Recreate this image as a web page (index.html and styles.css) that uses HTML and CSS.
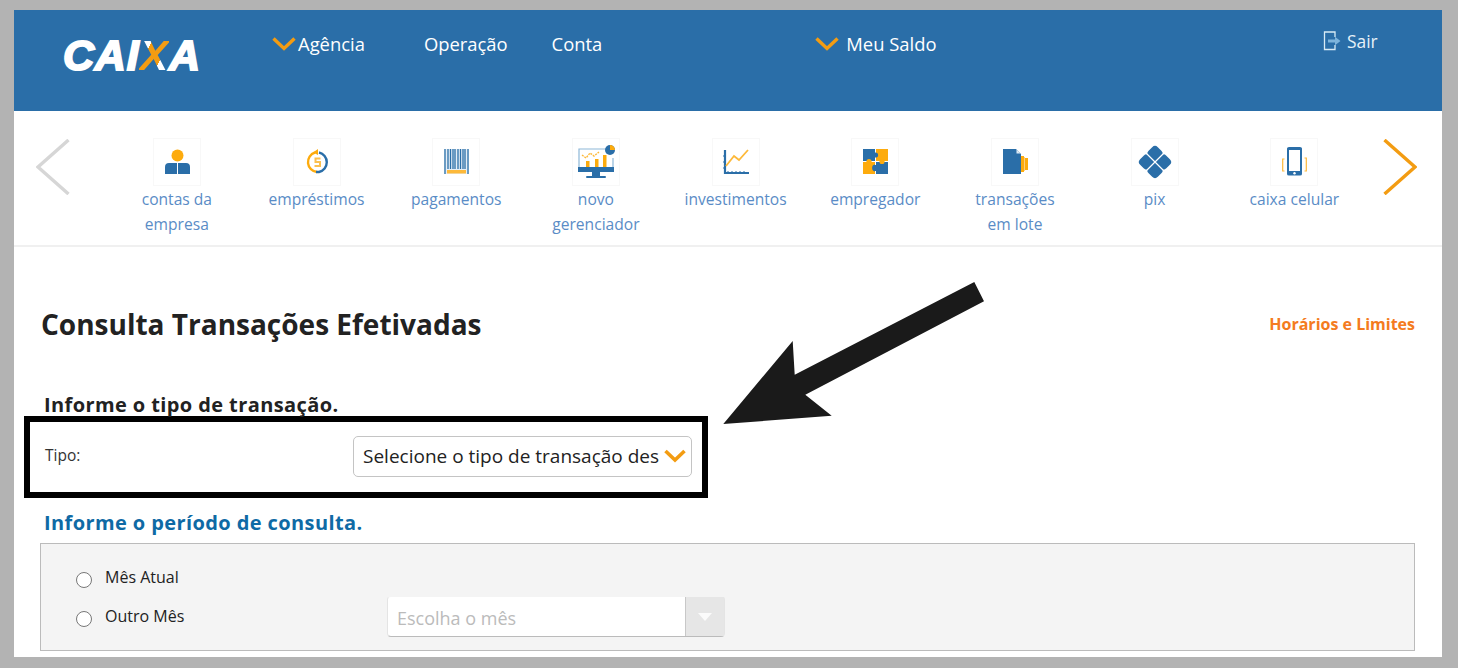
FILE: index.html
```html
<!DOCTYPE html>
<html>
<head>
  <meta charset="utf-8">
  <title>Consulta Transações Efetivadas | CAIXA</title>
  <link rel="stylesheet" href="styles.css">
</head>
<body>
  <div class="page">
    <header class="topbar">
      <div class="logo">CAI<span class="logo-x">X</span>A</div>
      <nav class="topnav">
        <a class="topnav-agencia" href="#"><svg class="chevron" width="24" height="14" viewBox="0 0 24 14"><path d="M1.5 1.5L12 11.5L22.5 1.5" fill="none" stroke="#f39c12" stroke-width="3.4"/></svg>Agência</a>
        <a class="topnav-operacao" href="#">Operação</a>
        <a class="topnav-conta" href="#">Conta</a>
        <a class="topnav-saldo" href="#"><svg class="chevron" width="24" height="14" viewBox="0 0 24 14"><path d="M1.5 1.5L12 11.5L22.5 1.5" fill="none" stroke="#f39c12" stroke-width="3.4"/></svg>Meu Saldo</a>
      </nav>
      <a class="logout" href="#">
        <svg width="19" height="20" viewBox="0 0 19 20"><path d="M12 6V1H1.5V18.5H12V14" fill="none" stroke="#d8ebf5" stroke-width="1.3"/><path d="M5 8.5H12V5.8L17.5 10L12 14.2V11.5H5Z" fill="#7db4dc"/></svg>
        Sair
      </a>
    </header>

    <section class="shortcuts">
      <svg class="arrow" width="34" height="56" viewBox="0 0 34 56"><path d="M32.5 1L2 28L32.5 55" fill="none" stroke="#d6d6d6" stroke-width="3.4"/></svg>
      <ul class="shortcut-list">
        <li class="shortcut">
          <span class="shortcut-icon"><svg width="48" height="48" viewBox="0 0 48 48"><circle cx="24.5" cy="17.5" r="6" fill="#fdab0d"/><path d="M12 36V29Q12 25 16 25H24V36Z M25 36V25H33Q37 25 37 29V36Z" fill="#2a6ea8"/></svg></span>
          contas da<br>empresa
        </li>
        <li class="shortcut">
          <span class="shortcut-icon"><svg width="48" height="48" viewBox="0 0 48 48"><path d="M22 14.5A10 10 0 0 0 24 34" fill="none" stroke="#fdab0d" stroke-width="2.4"/><path d="M20 14.5L25 11V17Z" fill="#fdab0d"/><path d="M26 14.5A10 10 0 0 1 26 34L23 34" fill="none" stroke="#2a6ea8" stroke-width="2.4"/><path d="M27.5 20.5H22.5V24H27V28H21.5" fill="none" stroke="#fbc04f" stroke-width="2"/></svg></span>
          empréstimos
        </li>
        <li class="shortcut">
          <span class="shortcut-icon"><svg width="48" height="48" viewBox="0 0 48 48"><rect x="12" y="11" width="25" height="25" fill="#e6eff7"/><path d="M13 11V36M16 11V31M18.5 11V31M21 11V31M23 11V31M26 11V31M28.5 11V31M31 11V31M33 11V31M36 11V36" stroke="#2a6ea8" stroke-width="1.3"/><rect x="15" y="32" width="19" height="3.5" fill="#fdb93a"/></svg></span>
          pagamentos
        </li>
        <li class="shortcut">
          <span class="shortcut-icon"><svg width="48" height="48" viewBox="0 0 48 48"><path d="M7 29V11H36" fill="none" stroke="#8db7d8" stroke-width="1.2"/><path d="M41 20V29" stroke="#8db7d8" stroke-width="1.2"/><rect x="6" y="29" width="36" height="5" fill="#2a6ea8"/><rect x="20" y="34" width="8" height="5" fill="#2a6ea8"/><rect x="14" y="38" width="20" height="2" rx="1" fill="#2a6ea8"/><path d="M14 29V23H17.5V29ZM23 29V21H26.5V29ZM31 29V17H34.5V29Z" fill="#fdab0d"/><path d="M10 17L14 20L18 15L22 18L27 14" fill="none" stroke="#fdb93a" stroke-width="1.4" stroke-dasharray="2 1"/><circle cx="38" cy="12" r="5" fill="#2a6ea8"/><path d="M38 12V7A5 5 0 0 1 43 12Z" fill="#fdab0d"/></svg></span>
          novo<br>gerenciador
        </li>
        <li class="shortcut">
          <span class="shortcut-icon"><svg width="48" height="48" viewBox="0 0 48 48"><path d="M13 12V35H37" fill="none" stroke="#2a6ea8" stroke-width="2.2"/><path d="M16 33V35M20 33V35M24 33V35M28 33V35M32 33V35M11 18H13M11 24H13M11 30H13" stroke="#2a6ea8" stroke-width="1"/><path d="M14 28L22 18L27 22L36 12" fill="none" stroke="#fdb93a" stroke-width="1.8"/></svg></span>
          investimentos
        </li>
        <li class="shortcut">
          <span class="shortcut-icon"><svg width="48" height="48" viewBox="0 0 48 48"><rect x="12" y="11" width="12" height="12" fill="#2a6ea8"/><rect x="25" y="11" width="12" height="12" fill="#fdab0d"/><rect x="12" y="24" width="12" height="12" fill="#fdab0d"/><rect x="25" y="24" width="12" height="12" fill="#2a6ea8"/><circle cx="24.5" cy="17" r="2.6" fill="#2a6ea8"/><circle cx="18" cy="23.5" r="2.6" fill="#fdab0d"/><circle cx="31" cy="23.5" r="2.6" fill="#fdab0d"/><circle cx="24.5" cy="30" r="3.4" fill="#2a6ea8"/><path d="M24.5 11V14M24.5 20V27M12 23.5H15M21 23.5H28M34 23.5H37M24.5 33V36" stroke="#fff" stroke-width="1"/></svg></span>
          empregador
        </li>
        <li class="shortcut">
          <span class="shortcut-icon"><svg width="48" height="48" viewBox="0 0 48 48"><path d="M12 11H25L30 16V36H12Z" fill="#2a6ea8"/><path d="M25.5 11.5L29.5 15.5H25.5Z" fill="#dbe8f3"/><rect x="30" y="18" width="3" height="16" fill="#fdab0d"/><rect x="33" y="19" width="1" height="14" fill="#fdd080"/><rect x="34" y="20" width="3" height="12" fill="#fdab0d"/></svg></span>
          transações<br>em lote
        </li>
        <li class="shortcut">
          <span class="shortcut-icon"><svg width="48" height="48" viewBox="0 0 48 48"><g fill="#2a6ea8"><rect x="17.5" y="9" width="13" height="13" rx="4" transform="rotate(45 24 15.5)"/><rect x="9" y="17.5" width="13" height="13" rx="4" transform="rotate(45 15.5 24)"/><rect x="26" y="17.5" width="13" height="13" rx="4" transform="rotate(45 32.5 24)"/><rect x="17.5" y="26" width="13" height="13" rx="4" transform="rotate(45 24 32.5)"/></g><path d="M14 14Q24 24 34 34M34 14Q24 24 14 34" fill="none" stroke="#fff" stroke-width="1.2"/></svg></span>
          pix
        </li>
        <li class="shortcut">
          <span class="shortcut-icon"><svg width="48" height="48" viewBox="0 0 48 48"><path d="M17 10.5Q17 9 19 9H30Q32 9 32 10.5V36Q32 37.5 30 37.5H19Q17 37.5 17 36Z M19 12V33H30V12Z" fill="#2a6ea8" fill-rule="evenodd"/><circle cx="24.5" cy="35.2" r="1.2" fill="#fff"/><path d="M14.5 21H12.7V33H14.5M34.5 20H36.3V33H34.5" fill="none" stroke="#fdb93a" stroke-width="1.2"/></svg></span>
          caixa celular
        </li>
      </ul>
      <svg class="arrow" width="34" height="56" viewBox="0 0 34 56"><path d="M1.5 1L32 28L1.5 55" fill="none" stroke="#f39c12" stroke-width="3.4"/></svg>
    </section>

    <main class="content">
      <div class="title-row">
        <h1>Consulta Transações Efetivadas</h1>
        <a class="limits" href="#">Horários e Limites</a>
      </div>

      <h2 class="step">Informe o tipo de transação.</h2>
      <div class="type-row">
        <label class="type-label">Tipo:</label>
        <div class="type-select">
          <span>Selecione o tipo de transação des</span>
          <svg width="22" height="14" viewBox="0 0 22 14"><path d="M1.5 2L11 11L20.5 2" fill="none" stroke="#f39c12" stroke-width="3.6"/></svg>
        </div>
      </div>

      <h2 class="step step-blue">Informe o período de consulta.</h2>
      <div class="period">
        <div class="period-row">
          <span class="radio"></span>
          <span class="period-label">Mês Atual</span>
        </div>
        <div class="period-row">
          <span class="radio"></span>
          <span class="period-label">Outro Mês</span>
          <div class="month-select">
            <span>Escolha o mês</span>
            <span class="month-button"><svg width="16" height="10" viewBox="0 0 16 10"><path d="M1 1H15L8 9Z" fill="#fbfbfb"/></svg></span>
          </div>
        </div>
      </div>
    </main>

    <svg class="pointer" width="270" height="150" viewBox="0 0 270 150"><path d="M3.3 143L111.7 134.7L85.3 113.7L264 20.3L254.3 1L74.7 93.7L72.7 60Z" fill="#1a1a1a"/></svg>
  </div>
</body>
</html>
```

FILE: styles.css
```css
body {
  margin: 0;
  height: 668px;
  overflow: hidden;
  background: #b3b3b3;
  font-family: "Open Sans", "Noto Sans", sans-serif;
  color: #222;
}

a {text-decoration: none;}

.page {
  position: relative;
  width: 1428px;
  height: 647px;
  margin: 10px 0 0 14px;
  background: #fff;
}

/* top bar */
.topbar {
  position: relative;
  display: flex;
  height: 101px;
  background: #2a6ea8;
}

.logo {
  width: 258px;
  padding: 21px 0 0 49px;
  box-sizing: border-box;
  font: italic bold 43px/48px "Liberation Sans", sans-serif;
  letter-spacing: .8px;
  color: #fff;
  -webkit-text-stroke: 2px #fff;
}

.logo-x {
  background: linear-gradient(120deg, #fff 0 33%, #f39c12 33% 66%, #fff 66% 100%);
  -webkit-background-clip: text;
  background-clip: text;
  color: transparent;
  -webkit-text-stroke: 0;
}

.topnav {
  display: flex;
  align-items: center;
  height: 67px;
  font-size: 18.4px;
}

.topnav a {color: #fff; display: flex; align-items: center;}
.topnav .chevron {margin-right: 2px;}
.topnav-operacao {margin-left: 59px;}
.topnav-conta {margin-left: 44px;}
.topnav-saldo {margin-left: 213px;}
.topnav-saldo .chevron {margin-right: 7px;}

.logout {
  display: flex;
  align-items: center;
  gap: 5px;
  position: absolute;
  top: 19px;
  left: 1309px;
  font-size: 17.4px;
  color: #e6f1f8;
}

/* shortcuts carousel */
.shortcuts {
  display: flex;
  align-items: flex-start;
  height: 136px;
  padding: 28px 25px 0 22px;
  box-sizing: border-box;
  border-bottom: 2px solid #f0f0f0;
}

.arrow {flex: none;}

.shortcut-list {
  display: flex;
  flex: 1;
  margin: -1px 0 0;
  padding: 0 0 0 37px;
  list-style: none;
}

.shortcut {
  flex: none;
  width: 139.7px;
  text-align: center;
  font-size: 15.6px;
  line-height: 25px;
  color: #5a8cc6;
}

.shortcut-icon {
  display: block;
  width: 48px;
  height: 48px;
  margin: 0 auto 1px;
  outline: 1px solid #f8f8f8;
  outline-offset: -1px;
}

.shortcut-icon svg {display: block;}

/* content */
.content {padding: 0 27px 0 26px;}

.title-row {
  display: flex;
  align-items: center;
  justify-content: space-between;
  height: 46px;
  margin: 54px 0 0 1px;
}

h1 {
  margin: 0;
  font-size: 28px;
  font-weight: 700;
  color: #222;
}

.limits {
  font-size: 16px;
  font-weight: 700;
  color: #f47b20;
}

.step {
  margin: 46px 0 0 4px;
  font-size: 20px;
  line-height: 24px;
  font-weight: 700;
  letter-spacing: .4px;
  color: #222;
}

.step-blue {
  margin-top: 13px;
  color: #0f6aa5;
}

.type-row {
  display: flex;
  align-items: center;
  justify-content: space-between;
  width: 647px;
  height: 68px;
  margin: -1px 0 0 -16px;
  padding: 0 10px 2px 15px;
  border: 6.5px solid #000;
}

.type-label {
  margin-bottom: 2px;
  font-size: 15.5px;
  color: #333;
}

.type-select {
  display: flex;
  align-items: center;
  justify-content: space-between;
  width: 339px;
  height: 41px;
  padding: 0 5px 0 9px;
  box-sizing: border-box;
  border: 1px solid #c4c4c4;
  border-radius: 5px;
  font-size: 19px;
  white-space: nowrap;
}

.period {
  display: flex;
  flex-direction: column;
  height: 108px;
  margin-top: 8px;
  padding: 15px 0 0 35px;
  box-sizing: border-box;
  background: #f4f4f4;
  border: 1px solid #bbb;
}

.period-row {
  display: flex;
  align-items: flex-start;
  height: 39px;
  padding-top: 10px;
  box-sizing: border-box;
}

.radio {
  flex: none;
  width: 14px;
  height: 14px;
  margin: 3px 14px 0 0;
  background: #fff;
  border: 1px solid #777;
  border-radius: 50%;
}

.period-label {
  width: 281px;
  margin-top: -2px;
  margin-left: -1px;
  padding-right: 1px;
  font-size: 16px;
  line-height: 20px;
  color: #222;
}

.month-select {
  display: flex;
  align-items: stretch;
  justify-content: space-between;
  flex: none;
  width: 338px;
  height: 41px;
  margin-top: -12px;
  box-sizing: border-box;
  background: #fff;
  border: 1px solid #e4e4e4;
  border-top-color: #f4f4f4;
  border-bottom-color: #bbb;
  border-radius: 4px;
  font-size: 18px;
  line-height: 42px;
  color: #bbb;
}

.month-select > span:first-child {padding-left: 9px;}

.month-button {
  display: flex;
  align-items: center;
  justify-content: center;
  width: 38px;
  background: #e6e6e6;
  border-left: 1px solid #c8c8c8;
}

/* annotation arrow over the page */
.pointer {
  position: absolute;
  left: 706px;
  top: 271px;
}
```
